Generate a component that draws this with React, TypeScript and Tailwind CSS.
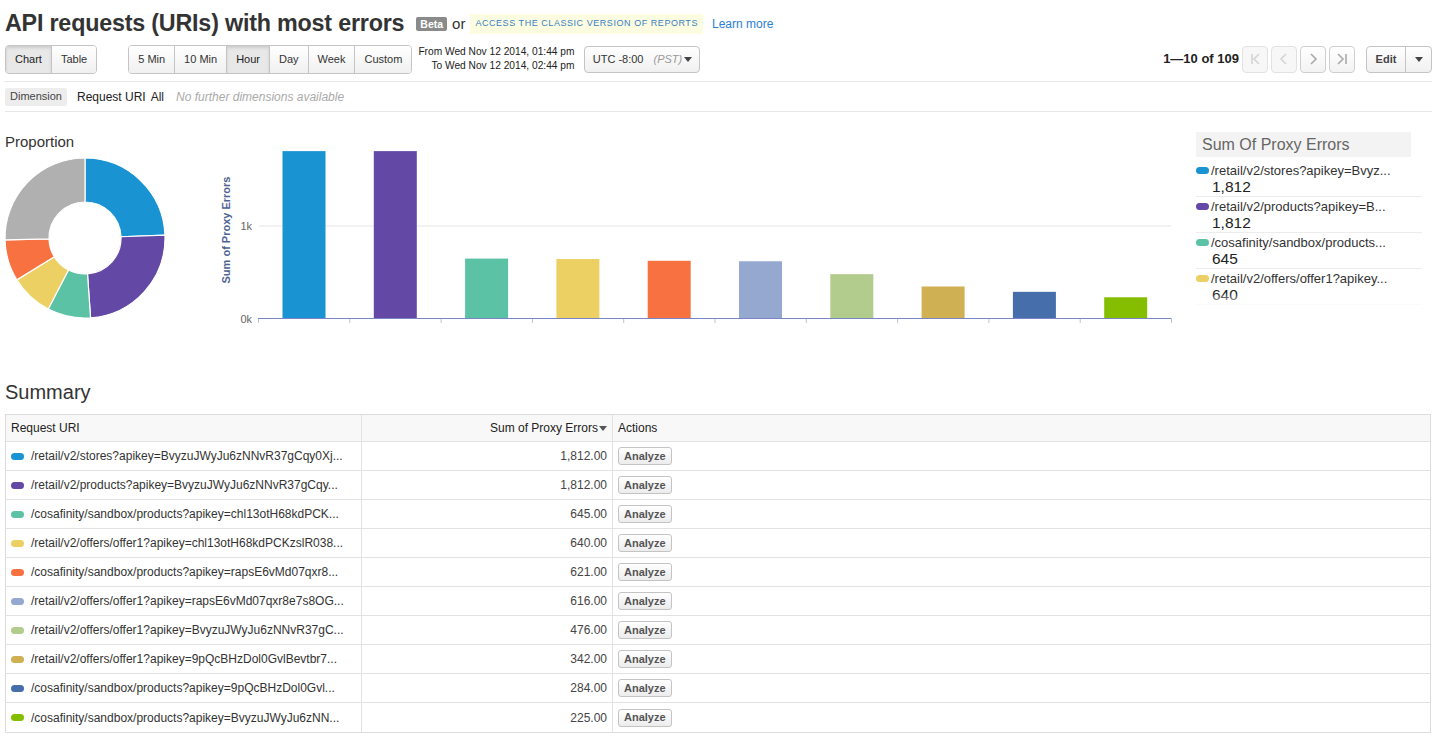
import React from "react";

const COLORS = ["#1a93d3", "#6349a5", "#5cc2a5", "#edd063", "#f77240", "#94a8d0", "#b2cc8e", "#cfb052", "#456eab", "#85bd00"];

const ROWS = [
  { uri: "/retail/v2/stores?apikey=BvyzuJWyJu6zNNvR37gCqy0Xj...", short: "/retail/v2/stores?apikey=Bvyz...", v: 1812 },
  { uri: "/retail/v2/products?apikey=BvyzuJWyJu6zNNvR37gCqy...", short: "/retail/v2/products?apikey=B...", v: 1812 },
  { uri: "/cosafinity/sandbox/products?apikey=chl13otH68kdPCK...", short: "/cosafinity/sandbox/products...", v: 645 },
  { uri: "/retail/v2/offers/offer1?apikey=chl13otH68kdPCKzslR038...", short: "/retail/v2/offers/offer1?apikey...", v: 640 },
  { uri: "/cosafinity/sandbox/products?apikey=rapsE6vMd07qxr8...", short: "", v: 621 },
  { uri: "/retail/v2/offers/offer1?apikey=rapsE6vMd07qxr8e7s8OG...", short: "", v: 616 },
  { uri: "/retail/v2/offers/offer1?apikey=BvyzuJWyJu6zNNvR37gC...", short: "", v: 476 },
  { uri: "/retail/v2/offers/offer1?apikey=9pQcBHzDol0GvlBevtbr7...", short: "", v: 342 },
  { uri: "/cosafinity/sandbox/products?apikey=9pQcBHzDol0Gvl...", short: "", v: 284 },
  { uri: "/cosafinity/sandbox/products?apikey=BvyzuJWyJu6zNN...", short: "", v: 225 },
];

const fmt = (n: number) => n.toLocaleString("en-US");

function Donut() {
  const vals = [1812, 1812, 645, 640, 621, 1882];
  const cols = [COLORS[0], COLORS[1], COLORS[2], COLORS[3], COLORS[4], "#b0b0b0"];
  const total = vals.reduce((a, b) => a + b, 0);
  const cx = 81, cy = 81, R = 80, r = 36;
  let acc = 0;
  const pt = (ang: number, rad: number) => [cx + rad * Math.sin(ang), cy - rad * Math.cos(ang)];
  return (
    <svg width="162" height="162" viewBox="0 0 162 162">
      {vals.map((v, i) => {
        const a0 = (acc / total) * Math.PI * 2;
        acc += v;
        const a1 = (acc / total) * Math.PI * 2;
        const large = a1 - a0 > Math.PI ? 1 : 0;
        const [x0, y0] = pt(a0, R);
        const [x1, y1] = pt(a1, R);
        const [x2, y2] = pt(a1, r);
        const [x3, y3] = pt(a0, r);
        const d = `M${x0},${y0} A${R},${R} 0 ${large} 1 ${x1},${y1} L${x2},${y2} A${r},${r} 0 ${large} 0 ${x3},${y3} Z`;
        return <path key={i} d={d} fill={cols[i]} stroke="#fff" strokeWidth="1.2" />;
      })}
    </svg>
  );
}

function BarChart() {
  const base = 183;
  const scale = 0.0921;
  const band = 91.3;
  const x0 = 58;
  return (
    <svg width="980" height="200" viewBox="0 0 980 200" className="block">
      <text
        x="0"
        y="0"
        transform="translate(30 95) rotate(-90)"
        textAnchor="middle"
        fontSize="11"
        fontWeight="bold"
        fill="#4d6390"
        fontFamily="'Liberation Sans', Arial, sans-serif"
      >
        Sum of Proxy Errors
      </text>
      <line x1={x0 + 1} x2="971" y1="91" y2="91" stroke="#e6e6e6" strokeWidth="1" />
      <text x="52" y="95" textAnchor="end" fontSize="11" fill="#666" fontFamily="'Liberation Sans', Arial, sans-serif">1k</text>
      <text x="52" y="188" textAnchor="end" fontSize="11" fill="#666" fontFamily="'Liberation Sans', Arial, sans-serif">0k</text>
      {ROWS.map((r, i) => {
        const h = r.v * scale;
        return <rect key={i} x={x0 + i * band + 24.5} y={base - h} width="43" height={h} fill={COLORS[i]} />;
      })}
      {Array.from({ length: 11 }).map((_, i) => (
        <line key={i} x1={x0 + i * band + 0.5} x2={x0 + i * band + 0.5} y1={base} y2={base + 5} stroke="#b8c4d8" strokeWidth="1" />
      ))}
      <line x1={x0} x2="971" y1={base + 0.5} y2={base + 0.5} stroke="#7b84c4" strokeWidth="1" />
    </svg>
  );
}

const btn =
  "h-[27px] px-[9px] flex items-center text-[11px] text-[#333] border-r border-[#c4c4c4] last:border-r-0 bg-gradient-to-b from-[#ffffff] to-[#f0f0f0]";
const btnActive =
  "h-[27px] px-[9px] flex items-center text-[11px] text-[#222] border-r border-[#c4c4c4] bg-[#e8e8e8] shadow-[inset_0_2px_3px_rgba(0,0,0,0.12)]";

function Chevron({ d, light }: { d: string; light?: boolean }) {
  return (
    <div className={`w-[26px] h-[27px] rounded-[4px] border ${light ? "border-[#e2e2e2] bg-[#f7f7f7]" : "border-[#cfcfcf] bg-gradient-to-b from-white to-[#f3f3f3]"} flex items-center justify-center`}>
      <svg width="12" height="14" viewBox="0 0 12 14">
        <path d={d} fill="none" stroke={light ? "#d4d4d4" : "#aaa"} strokeWidth="1.6" />
      </svg>
    </div>
  );
}

export default function App() {
  return (
    <div className="w-[1437px] h-[737px] bg-white overflow-hidden text-[#333]" style={{ fontFamily: "'Liberation Sans', Arial, Helvetica, sans-serif" }}>
      <div className="px-[5px]">
        {/* Title row */}
        <div className="flex items-center h-[44px] pt-[4px]">
          <h1 className="text-[23.3px] font-bold text-[#333] tracking-[-0.2px] leading-none">API requests (URIs) with most errors</h1>
          <span className="ml-[12px] bg-[#8a8a8a] text-white text-[10.5px] font-bold px-[4px] h-[14px] leading-[14px] rounded-[2px]">Beta</span>
          <span className="ml-[5px] text-[15px] text-[#333]">or</span>
          <span className="ml-[5px] bg-[#fcfce0] text-[#3a7fc7] text-[9px] tracking-[0.55px] uppercase h-[20px] px-[5px] flex items-center">Access the classic version of reports</span>
          <span className="ml-[9px] text-[12px] text-[#2a80d5]">Learn more</span>
        </div>
        {/* Toolbar */}
        <div className="flex items-center h-[30px]">
          <div className="flex border border-[#c4c4c4] rounded-[4px] overflow-hidden">
            <div className={btnActive}>Chart</div>
            <div className={btn}>Table</div>
          </div>
          <div className="ml-[31px] flex border border-[#c4c4c4] rounded-[4px] overflow-hidden">
            <div className={btn}>5 Min</div>
            <div className={btn}>10 Min</div>
            <div className={btnActive}>Hour</div>
            <div className={btn}>Day</div>
            <div className={btn}>Week</div>
            <div className={btn}>Custom</div>
          </div>
          <div className="ml-[6px] flex flex-col items-end text-[10.2px] leading-[14px] text-[#222]">
            <span>From Wed Nov 12 2014, 01:44 pm</span>
            <span>To Wed Nov 12 2014, 02:44 pm</span>
          </div>
          <div className="ml-[10px] h-[27px] w-[116px] flex items-center justify-center border border-[#c4c4c4] rounded-[4px] bg-gradient-to-b from-white to-[#f0f0f0] text-[11px] text-[#333]">
            UTC -8:00
            <span className="ml-[10px] italic text-[#999]">(PST)</span>
            <svg width="8" height="5" viewBox="0 0 8 5" className="ml-[2px]"><path d="M0 0h8L4 5z" fill="#444" /></svg>
          </div>
          <div className="ml-auto flex items-center">
            <span className="text-[13px] font-bold text-[#222] mr-[3px]">1—10 of 109</span>
            <div className="flex gap-[3px]">
              <Chevron d="M3 2v10M10 2L5 7l5 5" light />
              <Chevron d="M8 2L3 7l5 5" light />
              <Chevron d="M4 2l5 5-5 5" />
              <Chevron d="M2 2l5 5-5 5M10 2v10" />
            </div>
            <div className="ml-[11px] flex h-[27px] border border-[#c4c4c4] rounded-[4px] overflow-hidden bg-gradient-to-b from-white to-[#f0f0f0]">
              <div className="w-[39px] flex items-center justify-center text-[11px] font-bold text-[#444] border-r border-[#c4c4c4]">Edit</div>
              <div className="w-[25px] flex items-center justify-center">
                <svg width="8" height="5" viewBox="0 0 8 5"><path d="M0 0h8L4 5z" fill="#444" /></svg>
              </div>
            </div>
          </div>
        </div>
        <div className="mt-[7px] border-t border-[#e6e6e6]" />
        {/* Dimension row */}
        <div className="flex items-center h-[29px] text-[12px]">
          <span className="bg-[#ededed] text-[#444] text-[11px] h-[18px] px-[5px] flex items-center rounded-[2px]">Dimension</span>
          <span className="ml-[10px] text-[#222]">Request URI</span>
          <span className="ml-[5px] text-[#222]">All</span>
          <span className="ml-[12px] italic text-[#aaa]">No further dimensions available</span>
        </div>
        <div className="border-t border-[#e6e6e6]" />
        {/* Charts */}
        <div className="flex h-[268px] pt-[20px]">
          <div className="w-[195px] shrink-0">
            <div className="text-[15px] text-[#333] leading-[18px] mt-[1px]">Proportion</div>
            <div className="mt-[6px] -ml-[1px]">
              <Donut />
            </div>
          </div>
          <div className="shrink-0 mt-[3px]">
            <BarChart />
          </div>
          <div className="ml-[16px] w-[226px] shrink-0 relative h-[173px] overflow-hidden">
            <div className="w-[215px] h-[25px] bg-[#f3f3f3] text-[16px] text-[#666] flex items-center px-[6px]">Sum Of Proxy Errors</div>
            <div className="mt-[4px]">
              {ROWS.slice(0, 4).map((r, i) => (
                <div key={i} className="h-[36px] border-b border-[#ececec] pt-[2px]">
                  <div className="flex items-center text-[13px] text-[#333] leading-[15px] whitespace-nowrap">
                    <span className="w-[13px] h-[7px] rounded-full mr-[2px] shrink-0" style={{ background: COLORS[i] }} />
                    {r.short}
                  </div>
                  <div className="pl-[16px] text-[15.5px] text-[#222] leading-[18px]">{fmt(r.v)}</div>
                </div>
              ))}
            </div>
            <div className="absolute left-0 right-0 bottom-0 h-[12px] bg-gradient-to-b from-white/0 to-white/80" />
          </div>
        </div>
        {/* Summary */}
        <div className="text-[20px] text-[#333] leading-[24px]">Summary</div>
        <div className="mt-[10px] w-[1426px] border border-[#dcdcdc] text-[12px]">
          <div className="flex h-[27px] bg-[#f8f8f8] border-b border-[#e2e2e2] text-[#222]">
            <div className="w-[356px] border-r border-[#e2e2e2] flex items-center px-[5px]">Request URI</div>
            <div className="w-[251px] border-r border-[#e2e2e2] flex items-center justify-end px-[5px]">
              Sum of Proxy Errors
              <svg width="8" height="5" viewBox="0 0 8 5" className="ml-[1px]"><path d="M0 0h8L4 5z" fill="#555" /></svg>
            </div>
            <div className="flex-1 flex items-center px-[5px]">Actions</div>
          </div>
          {ROWS.map((r, i) => (
            <div key={i} className="flex h-[29px] border-b border-[#e2e2e2] last:border-b-0">
              <div className="w-[356px] border-r border-[#e2e2e2] flex items-center px-[5px] text-[#333]">
                <span className="w-[13px] h-[7px] rounded-full mr-[7px]" style={{ background: COLORS[i] }} />
                {r.uri}
              </div>
              <div className="w-[251px] border-r border-[#e2e2e2] flex items-center justify-end px-[5px] text-[#444]">
                {fmt(r.v)}.00
              </div>
              <div className="flex-1 flex items-center px-[5px]">
                <span className="h-[18px] px-[5px] flex items-center border border-[#c4c4c4] rounded-[3px] bg-gradient-to-b from-white to-[#ececec] text-[11px] font-bold text-[#555]">
                  Analyze
                </span>
              </div>
            </div>
          ))}
        </div>
      </div>
    </div>
  );
}
